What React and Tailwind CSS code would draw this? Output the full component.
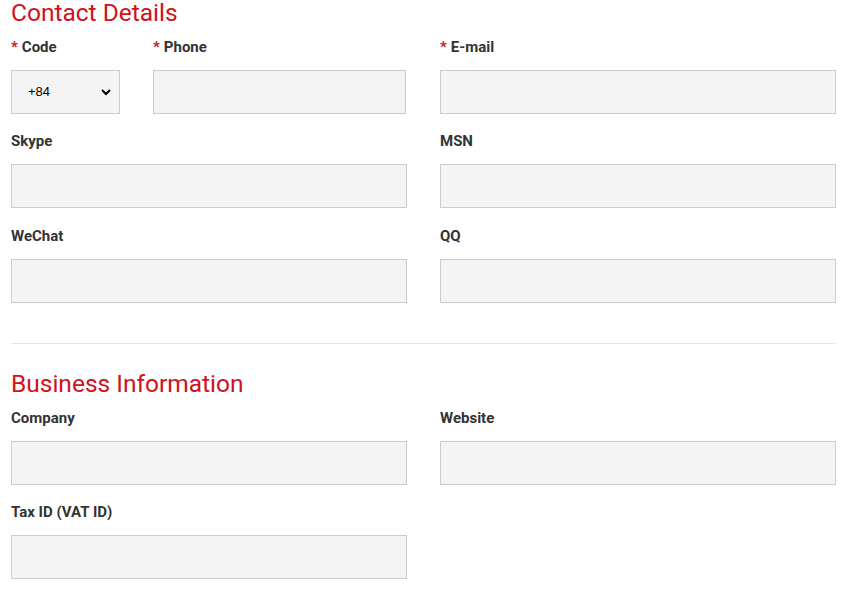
export default function App() {
  const font = { fontFamily: 'Roboto, "Liberation Sans", sans-serif' };
  const Label = ({ children, req }) => (
    <div className="h-[20px] leading-[20px] text-[15px] font-bold text-[#333] mb-[13px] mt-[1px]">
      {req && <span className="text-[#d0121b] mr-[4px]">*</span>}
      {children}
    </div>
  );
  const Input = () => <div className="h-[44px] bg-[#f4f4f4] border border-[#cccccc]" />;
  const Field = ({ label, req }) => (
    <div className="w-[396px]">
      <Label req={req}>{label}</Label>
      <Input />
    </div>
  );
  return (
    <div className="w-[854px] h-[592px] bg-white overflow-hidden pl-[11px]" style={font}>
      <div className="w-[825px]">
        <h2 className="text-[24.5px] leading-[26px] text-[#d0121b] mb-[10px]">Contact Details</h2>
        <div className="flex gap-[33px]">
          <div className="flex gap-[33px] w-[396px]">
            <div className="w-[109px]">
              <Label req>Code</Label>
              <div className="h-[44px] bg-[#f4f4f4] border border-[#cccccc] flex items-center justify-between pl-[16px] pr-[8px]">
                <span className="text-[13px] text-black" style={{ fontFamily: '"Liberation Sans", sans-serif' }}>+84</span>
                <svg width="10" height="7" viewBox="0 0 10 7"><path d="M1 1l4 4 4-4" stroke="#000" strokeWidth="2" fill="none" /></svg>
              </div>
            </div>
            <div className="w-[253px]">
              <Label req>Phone</Label>
              <Input />
            </div>
          </div>
          <Field label="E-mail" req />
        </div>
        <div className="flex gap-[33px] mt-[16px]">
          <Field label="Skype" />
          <Field label="MSN" />
        </div>
        <div className="flex gap-[33px] mt-[17px]">
          <Field label="WeChat" />
          <Field label="QQ" />
        </div>
        <div className="border-t border-[#e5e5e5] mt-[40px]" />
        <h2 className="text-[24.5px] leading-[26px] text-[#d0121b] mt-[27px] mb-[10px]">Business Information</h2>
        <div className="flex gap-[33px]">
          <Field label="Company" />
          <Field label="Website" />
        </div>
        <div className="flex gap-[33px] mt-[16px]">
          <Field label="Tax ID (VAT ID)" />
        </div>
      </div>
    </div>
  );
}
